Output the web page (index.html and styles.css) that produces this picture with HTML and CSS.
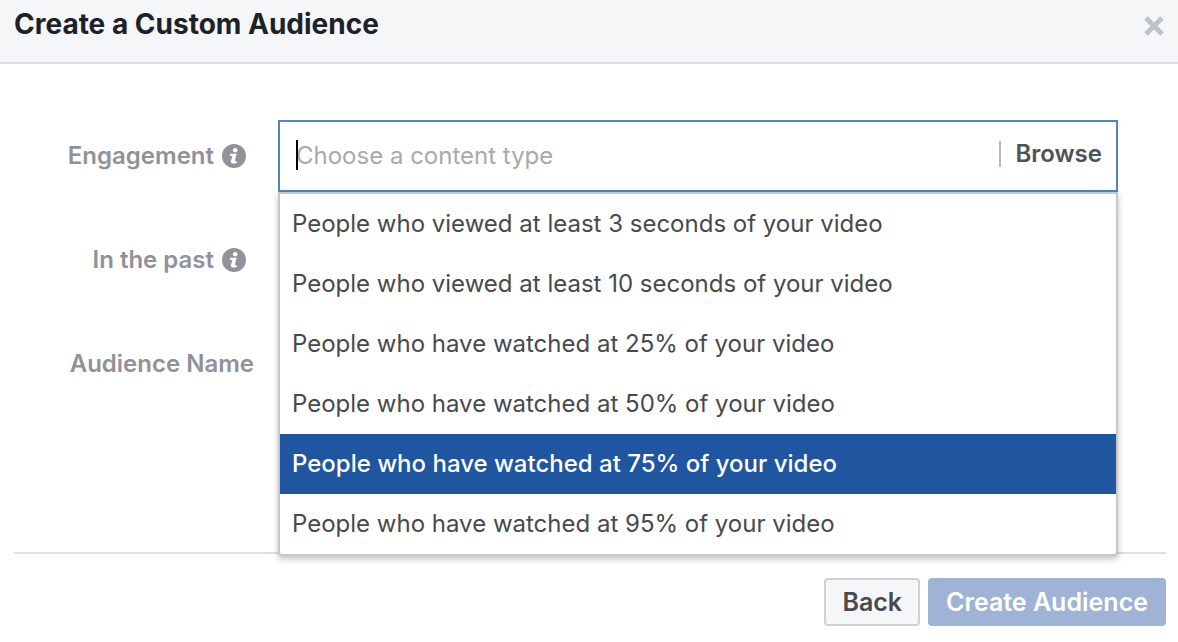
FILE: index.html
```html
<!DOCTYPE html>
<html lang="en">
<head>
    <meta charset="UTF-8">
    <title>Create a Custom Audience</title>
    <link rel="stylesheet" href="styles.css">
</head>
<body>
<form class="dialog" autocomplete="off">
    <header class="dialog-header">
        <h1>Create a Custom Audience</h1>
        <button type="button" class="close" aria-label="Close">
            <svg width="20" height="20" viewBox="0 0 20 20"><path d="M2 2L18 18M18 2L2 18" stroke="#bec2c9" stroke-width="5"/></svg>
        </button>
    </header>
    <div class="dialog-body">
        <div class="row">
            <div class="row-label">
                <label for="engagement">Engagement</label>
                <svg class="info" width="24" height="24" viewBox="0 0 24 24"><circle cx="12" cy="12" r="12" fill="#90939a"/><circle cx="13.2" cy="6.3" r="2.3" fill="#fff"/><path d="M8.2 9.8H14.6L12.8 17.2H15.2L14.6 19Q8.6 20.8 9 17L10.4 11.8H7.8Z" fill="#fff"/></svg>
            </div>
            <div class="combo">
                <div class="combo-box">
                    <span class="caret"></span>
                    <input type="text" id="engagement" placeholder="Choose a content type" role="combobox" aria-expanded="true" aria-controls="contentTypes">
                    <button type="button" class="browse">Browse</button>
                </div>
                <ul class="menu" id="contentTypes" role="listbox">
                    <li role="option">People who viewed at least 3 seconds of your video</li>
                    <li role="option">People who viewed at least 10 seconds of your video</li>
                    <li role="option">People who have watched at 25% of your video</li>
                    <li role="option">People who have watched at 50% of your video</li>
                    <li role="option" class="active" aria-selected="true">People who have watched at 75% of your video</li>
                    <li role="option">People who have watched at 95% of your video</li>
                </ul>
            </div>
        </div>
        <div class="row">
            <div class="row-label">
                <label for="days">In the past</label>
                <svg class="info" width="24" height="24" viewBox="0 0 24 24"><circle cx="12" cy="12" r="12" fill="#90939a"/><circle cx="13.2" cy="6.3" r="2.3" fill="#fff"/><path d="M8.2 9.8H14.6L12.8 17.2H15.2L14.6 19Q8.6 20.8 9 17L10.4 11.8H7.8Z" fill="#fff"/></svg>
            </div>
            <input type="text" class="field" id="days">
        </div>
        <div class="row">
            <div class="row-label">
                <label for="audienceName">Audience Name</label>
            </div>
            <input type="text" class="field" id="audienceName">
        </div>
    </div>
    <footer class="dialog-footer">
        <button type="button" class="btn">Back</button>
        <button type="submit" class="btn btn-primary" disabled>Create Audience</button>
    </footer>
</form>
</body>
</html>
```
FILE: styles.css
```css
* { box-sizing: border-box; }
body { margin: 0; background: #fff; color: #48494d; font-family: Inter, "Liberation Sans", sans-serif; font-size: 24px; line-height: 32px; }
button, input { font: inherit; color: inherit; }
button { padding: 0; border: none; background: none; cursor: pointer; }

.dialog-header { display: flex; align-items: flex-start; justify-content: space-between; height: 64px; padding: 8px 14px; background: #f5f6f7; border-bottom: 2px solid #dddfe2; }
h1 { margin: 0; color: #1d2129; font-size: 28px; font-weight: 700; line-height: 32px; }
.close { display: flex; padding: 8px 0; }

.dialog-body { display: flex; flex-direction: column; gap: 32px; padding: 56px 60px 152px 14px; }
.row { display: flex; align-items: center; gap: 24px; height: 72px; }
.row-label { display: flex; align-items: center; justify-content: flex-end; gap: 8px; width: 240px; color: #919297; font-weight: 600; }
.info { margin-right: 8px; }
.field { flex: 1; height: 48px; padding: 0 16px; border: 2px solid #dddfe2; }

.combo { position: relative; flex: 1; }
.combo-box { position: relative; display: flex; align-items: center; height: 72px; padding: 0 14px 0 16px; border: 2px solid #5484b8; background: #fff; }
.combo-box input { flex: 1; min-width: 0; padding: 0; border: none; outline: none; background: none; }
.combo-box input::placeholder { color: #a9a9a9; opacity: 1; }
.caret { position: absolute; left: 16px; top: 18px; width: 2px; height: 30px; background: #000; }
.browse { margin-bottom: 4px; padding-left: 14px; border-left: 2px solid #b0bcca; color: #515256; font-weight: 600; line-height: 26px; }

.menu { position: absolute; top: 100%; left: 0; right: 0; z-index: 1; margin: 0; padding: 0; list-style: none; background: #fff; border: 2px solid #c5c7ca; border-top-color: #b9cbdc; border-radius: 0 0 4px 4px; box-shadow: 0 3px 6px rgba(0,0,0,0.25); }
.menu li { padding: 14px 12px; }
.menu .active { background: #20559f; color: #fff; font-weight: 500; }

.dialog-footer { display: flex; justify-content: flex-end; gap: 8px; margin: 0 12px 0 14px; padding: 24px 0 16px; border-top: 2px solid #dddfe2; }
.btn { height: 48px; padding: 0 16px; border: 2px solid #ced0d4; border-radius: 4px; background: #f5f6f7; font-size: 25px; font-weight: 600; }
.btn-primary { border-color: #9fb3d6; background: #9fb3d6; color: #fff; }
```
